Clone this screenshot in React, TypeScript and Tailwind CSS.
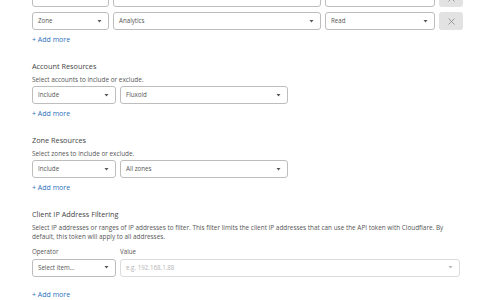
import React from "react";

const font = { fontFamily: '"Open Sans", "Noto Sans", sans-serif' };

function Caret({ light }: { light?: boolean }) {
  return (
    <svg width="5" height="3" viewBox="0 0 5 3" className="shrink-0">
      <path d="M0.5 0 L4.5 0 L2.5 2.6 Z" fill={light ? "#b8b8b8" : "#555"} />
    </svg>
  );
}

function Select({
  value,
  width,
  placeholder,
  light,
}: {
  value: string;
  width: string;
  placeholder?: boolean;
  light?: boolean;
}) {
  return (
    <div
      className={`${width} h-[18px] shrink-0 flex items-center justify-between pl-[5px] pr-[6px] bg-white border rounded-[3px] ${
        light ? "border-[#dcdcdc]" : "border-[#bdbdbd]"
      }`}
    >
      <span
        className={`text-[6.2px] leading-none ${
          placeholder ? "text-[#b4b4b4]" : "text-[#555]"
        }`}
      >
        {value}
      </span>
      <Caret light={light} />
    </div>
  );
}

function RemoveButton() {
  return (
    <div className="w-[24px] h-[18px] shrink-0 flex items-center justify-center bg-[#e2e2e2] rounded-[3px]">
      <svg width="7" height="7" viewBox="0 0 7 7">
        <path d="M0.5 0.5 L6.5 6.5 M6.5 0.5 L0.5 6.5" stroke="#8a8a8a" strokeWidth="0.8" />
      </svg>
    </div>
  );
}

function AddMore({ className }: { className?: string }) {
  return (
    <div className={`text-[7px] leading-none text-[#2c6fb7] ${className ?? ""}`}>
      + Add more
    </div>
  );
}

function SectionHead({ title, desc }: { title: string; desc: React.ReactNode }) {
  return (
    <>
      <div className="text-[7.3px] leading-none text-[#444]">{title}</div>
      <div className="mt-[6px] text-[6.4px] leading-[8.7px] text-[#555]">{desc}</div>
    </>
  );
}

export default function App() {
  return (
    <div className="w-[497px] h-[300px] overflow-hidden bg-white" style={font}>
      <div className="pl-[32px] pr-[35px] mt-[-11px]">
        <div className="flex flex-col gap-[5px]">
          <div className="flex gap-[4px]">
            <Select value="Zone" width="w-[77px]" />
            <Select value="Firewall Services" width="w-[208px]" />
            <Select value="Edit" width="w-[110px]" />
            <RemoveButton />
          </div>
          <div className="flex gap-[4px]">
            <Select value="Zone" width="w-[77px]" />
            <Select value="Analytics" width="w-[208px]" />
            <Select value="Read" width="w-[110px]" />
            <RemoveButton />
          </div>
        </div>
        <AddMore className="mt-[6px]" />

        <div className="mt-[20px]">
          <SectionHead title="Account Resources" desc="Select accounts to include or exclude." />
          <div className="flex gap-[4px] mt-[1px]">
            <Select value="Include" width="w-[84px]" />
            <Select value="Fluxoid" width="w-[168px]" />
          </div>
          <AddMore className="mt-[6px]" />
        </div>

        <div className="mt-[20px]">
          <SectionHead title="Zone Resources" desc="Select zones to include or exclude." />
          <div className="flex gap-[4px] mt-[1px]">
            <Select value="Include" width="w-[84px]" />
            <Select value="All zones" width="w-[168px]" />
          </div>
          <AddMore className="mt-[6px]" />
        </div>

        <div className="mt-[20px]">
          <SectionHead
            title="Client IP Address Filtering"
            desc="Select IP addresses or ranges of IP addresses to filter. This filter limits the client IP addresses that can use the API token with Cloudflare. By default, this token will apply to all addresses."
          />
          <div className="flex gap-[4px] mt-[7px] text-[6.2px] leading-none text-[#555]">
            <div className="w-[84px]">Operator</div>
            <div>Value</div>
          </div>
          <div className="flex gap-[4px] mt-[4px]">
            <Select value="Select item..." width="w-[84px]" />
            <Select value="e.g. 192.168.1.88" width="w-[340px]" placeholder light />
          </div>
          <AddMore className="mt-[14px]" />
        </div>
      </div>
    </div>
  );
}
